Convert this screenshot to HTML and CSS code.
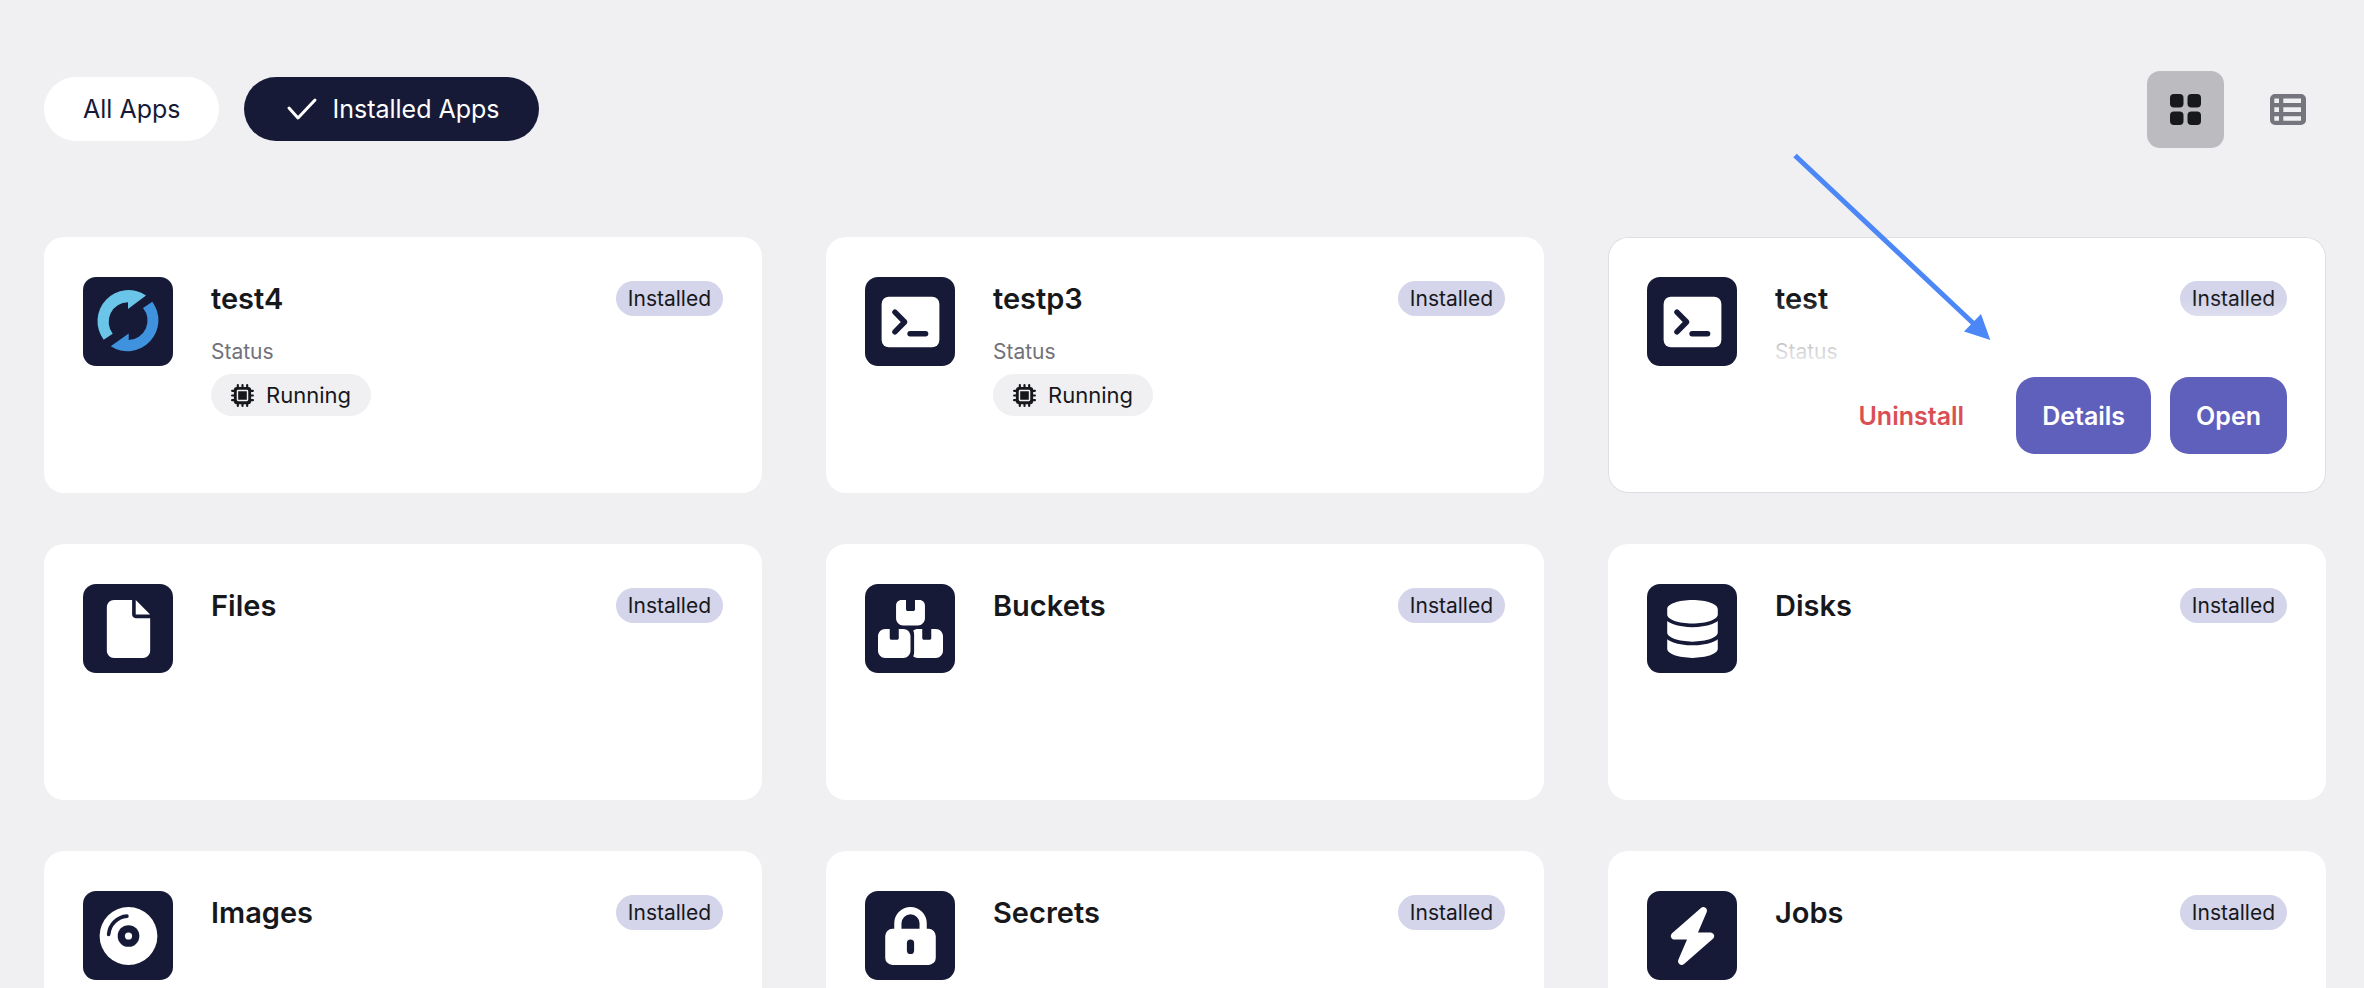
FILE: index.html
```html
<!DOCTYPE html>
<html lang="en">
<head>
<meta charset="utf-8">
<title>Apps</title>
<link rel="stylesheet" href="styles.css">
</head>
<body>
<svg class="sprite" aria-hidden="true">
  <symbol id="terminal" viewBox="0 0 576 512"><rect x="32" y="32" width="512" height="448" rx="64" fill="currentColor"/><path d="M150 168l86 88-86 88M284 360h138" class="cut"/></symbol>
  <symbol id="chip" viewBox="0 0 512 512"><path d="M152 24v464M256 24v464M360 24v464M24 152h464M24 256h464M24 360h464" fill="none" stroke="currentColor" stroke-width="48" stroke-linecap="round"/><rect x="64" y="64" width="384" height="384" rx="64" fill="currentColor"/><rect x="144" y="144" width="224" height="224" rx="16" fill="none" stroke="#f0f0f2" stroke-width="32"/></symbol>
</svg>
<main class="page">
  <header class="toolbar">
    <div class="filters">
      <button class="chip" type="button" aria-pressed="false">All Apps</button>
      <button class="chip chip-active" type="button" aria-pressed="true">
        <svg class="chip-check" viewBox="0 0 38 28" aria-hidden="true"><path d="M6 13l9 10L32 5"/></svg>
        Installed Apps
      </button>
    </div>
    <div class="views">
      <button class="view view-active" type="button" aria-label="Grid view" aria-pressed="true">
        <svg width="31" height="31" viewBox="0 0 31 31" fill="currentColor" aria-hidden="true"><rect width="13.5" height="13.5" rx="4"/><rect x="17.5" width="13.5" height="13.5" rx="4"/><rect y="17.5" width="13.5" height="13.5" rx="4"/><rect x="17.5" y="17.5" width="13.5" height="13.5" rx="4"/></svg>
      </button>
      <button class="view" type="button" aria-label="List view" aria-pressed="false">
        <svg width="36" height="31" viewBox="0 0 36 31" fill="currentColor" aria-hidden="true"><path fill-rule="evenodd" d="M5 0h26a5 5 0 0 1 5 5v21a5 5 0 0 1-5 5H5a5 5 0 0 1-5-5V5a5 5 0 0 1 5-5zM4.300 4.500v4.500h4.700V4.500zM13.300 4.500v4.500H31V4.500zM4.300 13.300V18H9v-4.700zM13.300 13.300V18H31v-4.700zM4.300 22.300v4.400H9v-4.400zM13.300 22.300v4.400H31v-4.400z"/></svg>
      </button>
    </div>
  </header>

  <section class="grid">
    <article class="card">
      <div class="tile"><svg class="logo" viewBox="0 0 90 89" aria-hidden="true"><path fill="#6ac5e8" d="M63 18.500A31 31 0 0 0 20.700 62.700l9-6A19.500 19.500 0 0 1 45 25.300V32z"/><path fill="#3f92de" d="M69.300 24.700A31 31 0 0 1 27.700 69.300l18-12.800V63A19.500 19.500 0 0 0 60 31z"/></svg></div>
      <div class="body">
        <div class="head"><h2 class="name">test4</h2><span class="tag">Installed</span></div>
        <div class="status"><span class="label">Status</span><span class="state"><svg class="state-icon" aria-hidden="true"><use href="#chip"/></svg>Running</span></div>
      </div>
    </article>
    <article class="card">
      <div class="tile"><svg class="icon" aria-hidden="true"><use href="#terminal"/></svg></div>
      <div class="body">
        <div class="head"><h2 class="name">testp3</h2><span class="tag">Installed</span></div>
        <div class="status"><span class="label">Status</span><span class="state"><svg class="state-icon" aria-hidden="true"><use href="#chip"/></svg>Running</span></div>
      </div>
    </article>
    <article class="card card-hover">
      <div class="tile"><svg class="icon" aria-hidden="true"><use href="#terminal"/></svg></div>
      <div class="body">
        <div class="head"><h2 class="name">test</h2><span class="tag">Installed</span></div>
        <div class="status"><span class="label">Status</span></div>
        <div class="actions">
          <button class="btn btn-danger" type="button">Uninstall</button>
          <button class="btn btn-primary" type="button">Details</button>
          <button class="btn btn-primary" type="button">Open</button>
        </div>
      </div>
      <svg class="pointer" width="200" height="190" viewBox="0 0 200 190" aria-hidden="true"><path d="M2 2.500L181 171" fill="none" stroke="#4c87f8" stroke-width="5"/><path d="M197.300 187l-26.300-8.500 17-17.500z" fill="#4c87f8"/></svg>
    </article>
    <article class="card">
      <div class="tile"><svg class="icon" viewBox="-96 0 576 512" fill="currentColor" aria-hidden="true"><path d="M0 64C0 28.700 28.700 0 64 0H224V128c0 17.700 14.300 32 32 32H384V448c0 35.300-28.700 64-64 64H64c-35.300 0-64-28.700-64-64V64zm384 64H256V0L384 128z"/></svg></div>
      <div class="body"><div class="head"><h2 class="name">Files</h2><span class="tag">Installed</span></div></div>
    </article>
    <article class="card">
      <div class="tile"><svg class="icon" viewBox="0 0 576 512" fill="currentColor" aria-hidden="true"><path d="M248 0H208c-26.500 0-48 21.500-48 48V160c0 35.300 28.700 64 64 64H352c35.300 0 64-28.700 64-64V48c0-26.500-21.500-48-48-48H328V80c0 8.800-7.200 16-16 16H264c-8.800 0-16-7.200-16-16V0zM64 256c-35.300 0-64 28.700-64 64V448c0 35.300 28.700 64 64 64H224c35.300 0 64-28.700 64-64V320c0-35.300-28.700-64-64-64H184v80c0 8.800-7.200 16-16 16H120c-8.800 0-16-7.200-16-16V256H64zM352 512H512c35.300 0 64-28.700 64-64V320c0-35.300-28.700-64-64-64H472v80c0 8.800-7.200 16-16 16H408c-8.800 0-16-7.200-16-16V256H352c-15 0-28.800 5.100-39.700 13.800c4.900 10.400 7.700 22 7.700 34.200V464c0 12.200-2.800 23.800-7.700 34.200C323.200 506.900 337 512 352 512z"/></svg></div>
      <div class="body"><div class="head"><h2 class="name">Buckets</h2><span class="tag">Installed</span></div></div>
    </article>
    <article class="card">
      <div class="tile"><svg class="icon" viewBox="-64 0 576 512" fill="currentColor" aria-hidden="true"><path d="M448 80v48c0 44.200-100.300 80-224 80S0 172.200 0 128V80C0 35.800 100.300 0 224 0S448 35.800 448 80zM393.200 214.700c20.800-7.400 39.900-16.900 54.800-28.600V288c0 44.200-100.300 80-224 80S0 332.200 0 288V186.100c14.900 11.800 34 21.200 54.800 28.600C99.700 230.700 159.500 240 224 240s124.300-9.300 169.200-25.300zM0 346.100c14.900 11.800 34 21.200 54.800 28.600C99.700 390.700 159.500 400 224 400s124.300-9.300 169.200-25.300c20.800-7.400 39.900-16.900 54.800-28.600V432c0 44.200-100.300 80-224 80S0 476.200 0 432V346.100z"/></svg></div>
      <div class="body"><div class="head"><h2 class="name">Disks</h2><span class="tag">Installed</span></div></div>
    </article>
    <article class="card">
      <div class="tile"><svg class="icon" viewBox="-32 0 576 512" fill="currentColor" aria-hidden="true"><circle cx="256" cy="256" r="256"/><circle class="hole" cx="256" cy="256" r="96"/><circle cx="256" cy="256" r="32"/><path class="groove" d="M80 242A176 176 0 0 1 242 80"/></svg></div>
      <div class="body"><div class="head"><h2 class="name">Images</h2><span class="tag">Installed</span></div></div>
    </article>
    <article class="card">
      <div class="tile"><svg class="icon" viewBox="-64 0 576 512" fill="currentColor" aria-hidden="true"><path d="M112 200v-56a112 112 0 0 1 224 0v56" fill="none" stroke="currentColor" stroke-width="64"/><rect y="192" width="448" height="320" rx="64"/><rect class="hole" x="192" y="288" width="64" height="128" rx="32"/></svg></div>
      <div class="body"><div class="head"><h2 class="name">Secrets</h2><span class="tag">Installed</span></div></div>
    </article>
    <article class="card">
      <div class="tile"><svg class="icon" viewBox="-64 0 576 512" fill="currentColor" aria-hidden="true"><path d="M349.400 44.600c5.900-13.700 1.500-29.700-10.600-38.500s-28.600-8-39.900 1.800l-256 224c-10 8.800-13.600 22.900-8.900 35.300S50.700 288 64 288H175.500L98.600 467.400c-5.900 13.700-1.500 29.700 10.600 38.500s28.600 8 39.900-1.800l256-224c10-8.800 13.600-22.900 8.900-35.300s-16.600-20.700-30-20.700H272.500L349.400 44.600z"/></svg></div>
      <div class="body"><div class="head"><h2 class="name">Jobs</h2><span class="tag">Installed</span></div></div>
    </article>
  </section>
</main>
</body>
</html>
```
FILE: styles.css
```css
* { box-sizing: border-box; }

body {
  margin: 0;
  background: #f0f0f2;
  color: #17181c;
  font-family: Inter, "Liberation Sans", sans-serif;
  font-size: 25px;
}

button { font: inherit; border: 0; cursor: pointer; }

.sprite { position: absolute; width: 0; height: 0; }

.page { padding: 71px 38px 0 44px; height: 100vh; overflow: hidden; }

.toolbar {
  display: flex;
  align-items: center;
  justify-content: space-between;
  margin-bottom: 89px;
}

.filters, .views { display: flex; align-items: center; gap: 25px; }
.filters { padding-bottom: 1px; }

.chip {
  display: flex;
  align-items: center;
  gap: 11px;
  height: 64px;
  padding: 0 39px;
  border-radius: 32px;
  background: #fff;
  color: #161a37;
}
.chip-active { background: #161a37; color: #fff; }
.chip-check {
  width: 38px;
  height: 28px;
  fill: none;
  stroke: currentColor;
  stroke-width: 3;
  stroke-linecap: round;
  stroke-linejoin: round;
}

.view {
  display: grid;
  place-items: center;
  width: 77px;
  height: 77px;
  padding: 0;
  border-radius: 13px;
  background: transparent;
  color: #75757e;
}
.view-active { background: #bcbbc0; color: #17181c; }

.grid {
  display: grid;
  grid-template-columns: repeat(3, 1fr);
  gap: 51px 64px;
}

.card {
  position: relative;
  display: flex;
  align-items: flex-start;
  gap: 38px;
  min-height: 256px;
  padding: 40px 39px;
  border-radius: 20px;
  background: #fff;
}
.card-hover { box-shadow: inset 0 0 0 1px #dedee1; }

.tile {
  display: grid;
  place-items: center;
  flex: none;
  width: 90px;
  height: 89px;
  border-radius: 13px;
  background: #161a37;
  color: #fff;
}
.icon { width: 65px; height: 58px; }
.logo { width: 90px; height: 89px; }
.hole { fill: #161a37; }
.cut, .groove { fill: none; stroke: #161a37; stroke-linecap: round; stroke-linejoin: round; }
.cut { stroke-width: 48px; }
.groove { stroke-width: 32px; }

.body { flex: 1; min-width: 0; }

.head {
  display: flex;
  align-items: center;
  justify-content: space-between;
  height: 43px;
}
.name { margin: 0; font-size: 29px; line-height: 43px; font-weight: 600; }
.tag {
  padding: 0 12px;
  border-radius: 18px;
  background: #d4d4ea;
  font-size: 21px;
  line-height: 35px;
}

.status {
  display: flex;
  flex-direction: column;
  align-items: flex-start;
  gap: 9px;
  margin-top: 19px;
}
.label { color: #71717a; font-size: 21px; line-height: 26px; }
.state {
  display: flex;
  align-items: center;
  gap: 12px;
  height: 42px;
  padding: 0 20px;
  border-radius: 21px;
  background: #f0f0f2;
  font-size: 22px;
}
.state-icon { width: 23px; height: 23px; }

/* Hover actions fade the card details out behind them */
.actions {
  position: absolute;
  left: 165px;
  right: 39px;
  bottom: 39px;
  display: flex;
  justify-content: flex-end;
  padding-top: 78px;
  background: linear-gradient(rgba(255, 255, 255, 0), #fff 74px);
}
.btn {
  height: 77px;
  padding: 0 26px;
  border-radius: 19px;
  font-weight: 600;
}
.btn-primary { background: #5f5fbc; color: #fff; }
.btn-primary + .btn-primary { margin-left: 19px; }
.btn-danger { margin-right: 26px; background: transparent; color: #da4f54; }

.pointer { position: absolute; left: 185px; top: -84px; pointer-events: none; }
```
